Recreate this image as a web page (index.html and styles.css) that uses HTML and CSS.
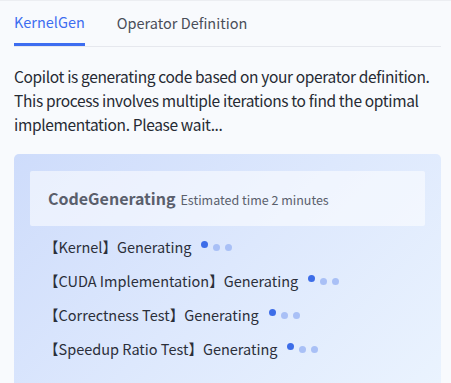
FILE: index.html
```html
<html lang="en">
<head>
    <meta charset="UTF-8">
    <title>KernelGen</title>
    <link rel="stylesheet" href="styles.css">
</head>
<body>
    <div id="panel">
        <ul id="tabs">
            <li class="selected">KernelGen</li>
            <li>Operator Definition</li>
        </ul>
        <p class="intro">Copilot is generating code based on your operator definition. This process involves multiple iterations to find the optimal implementation. Please wait...</p>
        <div class="progress">
            <div class="progress-head">
                <span class="title">CodeGenerating</span>
                <span class="eta">Estimated time 2 minutes</span>
            </div>
            <ul class="steps">
                <li>【Kernel】Generating<span class="dots"><i></i><i></i><i></i></span></li>
                <li>【CUDA Implementation】Generating<span class="dots"><i></i><i></i><i></i></span></li>
                <li>【Correctness Test】Generating<span class="dots"><i></i><i></i><i></i></span></li>
                <li>【Speedup Ratio Test】Generating<span class="dots"><i></i><i></i><i></i></span></li>
            </ul>
        </div>
    </div>
</body>
</html>
```
FILE: styles.css
```css
*{
    margin: 0;
    padding: 0;
}
ul, ol{
    list-style: none;
}
html, body{
    height: 100%;
    overflow: hidden;
}
body{
    background: #f8fafd;
    border-top: 1px solid #eceef2;
    font-family: "Noto Sans CJK SC", sans-serif;
    color: #2b2f3a;
}

#panel{
    padding: 0 10px 0 14px;
}

#tabs{
    display: flex;
    gap: 32px;
    border-bottom: 1px solid #e6e8ee;
    height: 45px;
}
#tabs li{
    font-size: 14.5px;
    line-height: 44px;
    color: #4a4e59;
    cursor: pointer;
}
#tabs .selected{
    color: #3d6df0;
    border-bottom: 3px solid #3d6df0;
    line-height: 42px;
}

.intro{
    margin: 17px -10px 0 0;
    font-size: 15.5px;
    line-height: 24px;
    letter-spacing: -0.35px;
    color: #262a33;
}

.progress{
    margin-top: 18px;
    padding: 17px 16px 17px;
    border-radius: 5px 5px 0 0;
    background: linear-gradient(135deg, #cedcfb 0%, #dde8fd 50%, #eaf3fe 100%);
}
.progress-head{
    display: flex;
    align-items: baseline;
    gap: 5px;
    padding: 15px 18px 16px;
    background: rgba(255, 255, 255, 0.55);
    border-radius: 2px;
}
.progress-head .title{
    font-size: 16px;
    font-weight: bold;
    color: #5a5f6c;
}
.progress-head .eta{
    font-size: 12.5px;
    color: #5a5f6c;
}

.steps{
    padding: 4px 0 0 14px;
}
.steps li{
    display: flex;
    align-items: center;
    height: 34px;
    line-height: 20px;
    font-size: 14.5px;
    color: #2b2f3a;
}
.dots{
    display: flex;
    align-items: center;
    gap: 5px;
    margin-left: 10px;
}
.dots i{
    width: 7px;
    height: 7px;
    border-radius: 50%;
    background: #a9c0f6;
}
.dots i:first-child{
    background: #3d6de8;
    transform: translateY(-3px);
}
```
